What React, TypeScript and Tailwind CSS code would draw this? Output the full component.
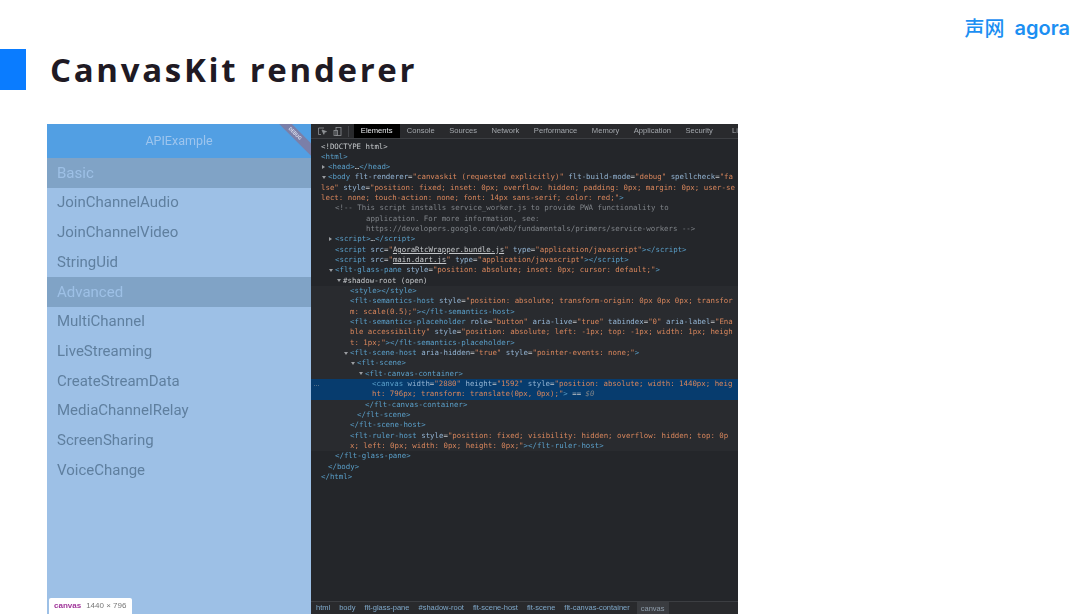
const tagC = "text-[#5a9fc9]";
const attrC = "text-[#93b4d3]";
const valC = "text-[#d8865c]";
const comC = "text-[#7f8388]";
const plainC = "text-[#c4c7ca]";

type Seg = [string, string];
type Line = { x: number; arrow?: "open" | "closed"; segs: Seg[]; hl?: boolean; shade?: boolean };

const pad: Record<number, string> = {
  321: "pl-[10px]",
  328: "pl-[17px]",
  335: "pl-[24px]",
  343: "pl-[32px]",
  350: "pl-[39px]",
  357: "pl-[46px]",
  365: "pl-[54px]",
  366: "pl-[55px]",
  372: "pl-[61px]",
};

const lines: Line[] = [
  { x: 321, segs: [[plainC, "<!DOCTYPE html>"]] },
  { x: 321, segs: [[tagC, "<html>"]] },
  { x: 328, arrow: "closed", segs: [[tagC, "<head>"], [plainC, "…"], [tagC, "</head>"]] },
  { x: 328, arrow: "open", segs: [[tagC, "<body "], [attrC, "flt-renderer"], [plainC, "="], [valC, "\"canvaskit (requested explicitly)\""], [attrC, " flt-build-mode"], [plainC, "="], [valC, "\"debug\""], [attrC, " spellcheck"], [plainC, "="], [valC, "\"fa"]] },
  { x: 321, segs: [[valC, "lse\""], [attrC, " style"], [plainC, "="], [valC, "\"position: fixed; inset: 0px; overflow: hidden; padding: 0px; margin: 0px; user-se"]] },
  { x: 321, segs: [[valC, "lect: none; touch-action: none; font: 14px sans-serif; color: red;\""], [tagC, ">"]] },
  { x: 335, segs: [[comC, "<!-- This script installs service_worker.js to provide PWA functionality to"]] },
  { x: 366, segs: [[comC, "application. For more information, see:"]] },
  { x: 366, segs: [[comC, "https://developers.google.com/web/fundamentals/primers/service-workers -->"]] },
  { x: 335, arrow: "closed", segs: [[tagC, "<script>"], [plainC, "…"], [tagC, "</script>"]] },
  { x: 335, segs: [[tagC, "<script "], [attrC, "src"], [plainC, "="], [valC, "\""], [plainC + " underline", "AgoraRtcWrapper.bundle.js"], [valC, "\""], [attrC, " type"], [plainC, "="], [valC, "\"application/javascript\""], [tagC, "></script>"]] },
  { x: 335, segs: [[tagC, "<script "], [attrC, "src"], [plainC, "="], [valC, "\""], [plainC + " underline", "main.dart.js"], [valC, "\""], [attrC, " type"], [plainC, "="], [valC, "\"application/javascript\""], [tagC, "></script>"]] },
  { x: 335, arrow: "open", segs: [[tagC, "<flt-glass-pane "], [attrC, "style"], [plainC, "="], [valC, "\"position: absolute; inset: 0px; cursor: default;\""], [tagC, ">"]] },
  { x: 343, arrow: "open", segs: [[plainC, "#shadow-root (open)"]] },
  { x: 350, shade: true, segs: [[tagC, "<style></style>"]] },
  { x: 350, shade: true, segs: [[tagC, "<flt-semantics-host "], [attrC, "style"], [plainC, "="], [valC, "\"position: absolute; transform-origin: 0px 0px 0px; transfor"]] },
  { x: 350, shade: true, segs: [[valC, "m: scale(0.5);\""], [tagC, "></flt-semantics-host>"]] },
  { x: 350, shade: true, segs: [[tagC, "<flt-semantics-placeholder "], [attrC, "role"], [plainC, "="], [valC, "\"button\""], [attrC, " aria-live"], [plainC, "="], [valC, "\"true\""], [attrC, " tabindex"], [plainC, "="], [valC, "\"0\""], [attrC, " aria-label"], [plainC, "="], [valC, "\"Ena"]] },
  { x: 350, shade: true, segs: [[valC, "ble accessibility\""], [attrC, " style"], [plainC, "="], [valC, "\"position: absolute; left: -1px; top: -1px; width: 1px; heigh"]] },
  { x: 350, shade: true, segs: [[valC, "t: 1px;\""], [tagC, "></flt-semantics-placeholder>"]] },
  { x: 350, shade: true, arrow: "open", segs: [[tagC, "<flt-scene-host "], [attrC, "aria-hidden"], [plainC, "="], [valC, "\"true\""], [attrC, " style"], [plainC, "="], [valC, "\"pointer-events: none;\""], [tagC, ">"]] },
  { x: 357, shade: true, arrow: "open", segs: [[tagC, "<flt-scene>"]] },
  { x: 365, shade: true, arrow: "open", segs: [[tagC, "<flt-canvas-container>"]] },
  { x: 372, hl: true, segs: [[tagC, "<canvas "], [attrC, "width"], [plainC, "="], [valC, "\"2880\""], [attrC, " height"], [plainC, "="], [valC, "\"1592\""], [attrC, " style"], [plainC, "="], [valC, "\"position: absolute; width: 1440px; heig"]] },
  { x: 372, hl: true, segs: [[valC, "ht: 796px; transform: translate(0px, 0px);\""], [tagC, ">"], [plainC, " == "], [comC + " italic", "$0"]] },
  { x: 365, shade: true, segs: [[tagC, "</flt-canvas-container>"]] },
  { x: 357, shade: true, segs: [[tagC, "</flt-scene>"]] },
  { x: 350, shade: true, segs: [[tagC, "</flt-scene-host>"]] },
  { x: 350, shade: true, segs: [[tagC, "<flt-ruler-host "], [attrC, "style"], [plainC, "="], [valC, "\"position: fixed; visibility: hidden; overflow: hidden; top: 0p"]] },
  { x: 350, shade: true, segs: [[valC, "x; left: 0px; width: 0px; height: 0px;\""], [tagC, "></flt-ruler-host>"]] },
  { x: 335, segs: [[tagC, "</flt-glass-pane>"]] },
  { x: 328, segs: [[tagC, "</body>"]] },
  { x: 321, segs: [[tagC, "</html>"]] },
];

const tabs = ["Console", "Sources", "Network", "Performance", "Memory", "Application", "Security"];
const crumbs = ["html", "body", "flt-glass-pane", "#shadow-root", "flt-scene-host", "flt-scene", "flt-canvas-container"];
const basic = ["JoinChannelAudio", "JoinChannelVideo", "StringUid"];
const advanced = ["MultiChannel", "LiveStreaming", "CreateStreamData", "MediaChannelRelay", "ScreenSharing", "VoiceChange"];

const Row = ({ label }: { label: string }) => (
  <div className="flex h-[29.7px] items-center pl-[10px] text-[#5f7f9f]">{label}</div>
);

const Section = ({ label }: { label: string }) => (
  <div className="flex h-[29.7px] items-center bg-[#80a3c6] pl-[10px] text-[#9dc0e6]">{label}</div>
);

const App = () => {
  return (
    <div className="flex h-[614px] w-[1080px] flex-col overflow-hidden bg-white font-['Open_Sans',sans-serif]">
      <div className="flex h-[49px] shrink-0 items-start justify-end pr-[10px] pt-[15px] text-[#1c8ff2]">
        <span className="font-['Noto_Sans_CJK_SC',sans-serif] text-[20px] leading-[26px] font-medium">声网</span>
        <span className="ml-[10px] font-['Inter',sans-serif] text-[20px] leading-[26px] font-semibold">agora</span>
      </div>

      <div className="flex h-[41px] shrink-0 items-center">
        <div className="h-full w-[26px] bg-[#0a7cff]" />
        <h1 className="ml-[24px] text-[33px] leading-[41px] font-bold tracking-[2.7px] text-[#1f1a24]">CanvasKit renderer</h1>
      </div>

      <div className="ml-[47px] mt-[34px] flex min-h-0 flex-1 blur-[0.3px]">
        <div className="relative w-[264px] overflow-hidden bg-[#9dc0e6] font-['Roboto',sans-serif] text-[15px]">
          <div className="flex h-[34.2px] items-center justify-center bg-[#529fe3] text-[12.5px] text-[#9dc5ee]">APIExample</div>
          <Section label="Basic" />
          {basic.map((b) => (
            <Row key={b} label={b} />
          ))}
          <Section label="Advanced" />
          {advanced.map((a) => (
            <Row key={a} label={a} />
          ))}
          <div className="absolute right-[-17px] top-[5px] flex h-[9px] w-[66px] rotate-45 items-center justify-center bg-[#7b7fa8] text-[5px] font-bold text-[#d5d8e8]">
            DEBUG
          </div>
          <div className="absolute bottom-0 left-[2px] flex h-[16px] w-[83px] items-center rounded-t-[2px] bg-white pl-[5px] font-['Liberation_Sans',sans-serif] text-[8px]">
            <span className="font-bold text-[#a0359a]">canvas</span>
            <span className="ml-[5px] text-[#777]">1440 × 796</span>
          </div>
        </div>

        <div className="flex w-[427px] flex-col bg-[#24262a]">
          <div className="flex h-[15px] shrink-0 items-stretch border-b border-[#3c3e42] bg-[#292a2d] font-['Liberation_Sans',sans-serif] text-[7.6px] text-[#a4a8ad]">
            <div className="flex w-[43px] items-center pl-[6px]">
              <svg width="34" height="11" viewBox="0 0 34 11" fill="none" stroke="#8f9296" strokeWidth="0.8">
                <path d="M7 2H1.5v6.5H4" />
                <path d="M5 4l4.5 1.6-2 .7-.7 2z" fill="#8f9296" />
                <rect x="19" y="1.5" width="5" height="8" />
                <rect x="17" y="4.5" width="3.5" height="5" />
                <path d="M31.5 0v11" stroke="#4a4c50" />
              </svg>
            </div>
            <div className="flex w-[46px] items-center justify-center bg-black text-[#e8eaed]">Elements</div>
            {tabs.map((t) => (
              <div key={t} className="flex items-center px-[7.25px]">
                {t}
              </div>
            ))}
            <div className="flex items-center overflow-hidden pl-[12px]">Li</div>
          </div>

          <div className="min-h-0 flex-1 overflow-hidden pt-[2.5px] font-['DejaVu_Sans_Mono',monospace] text-[7.4px] leading-[10.34px]">
            {lines.map((l, i) => (
              <div
                key={i}
                className={`relative h-[10.34px] whitespace-pre ${pad[l.x]} ${l.hl ? "bg-[#073c6e]" : l.shade ? "bg-[#292b2f]" : ""}`}
              >
                {l.hl && l.segs[0][1] === "<canvas " && (
                  <span className="absolute left-[2px] text-[5px] tracking-[-1px] text-[#9a9da1]">...</span>
                )}
                {l.arrow === "open" && (
                  <span className="absolute top-[3.5px] -ml-[6px] h-0 w-0 border-x-[2.2px] border-t-[3.5px] border-x-transparent border-t-[#9a9da1]" />
                )}
                {l.arrow === "closed" && (
                  <span className="absolute top-[3px] -ml-[6px] h-0 w-0 border-y-[2.2px] border-l-[3.5px] border-y-transparent border-l-[#9a9da1]" />
                )}
                {l.segs.map((s, j) => (
                  <span key={j} className={s[0]}>
                    {s[1]}
                  </span>
                ))}
              </div>
            ))}
          </div>

          <div className="flex h-[13px] shrink-0 items-center gap-[9px] border-t border-[#3c3e42] bg-[#292a2d] pl-[5px] font-['Liberation_Sans',sans-serif] text-[7.5px] text-[#7fa8c9]">
            {crumbs.map((c) => (
              <span key={c}>{c}</span>
            ))}
            <span className="-ml-[2px] bg-[#3a3c40] px-[4px] leading-[13px] text-[#8f9dab]">canvas</span>
          </div>
        </div>
      </div>
    </div>
  );
};

export default App;
